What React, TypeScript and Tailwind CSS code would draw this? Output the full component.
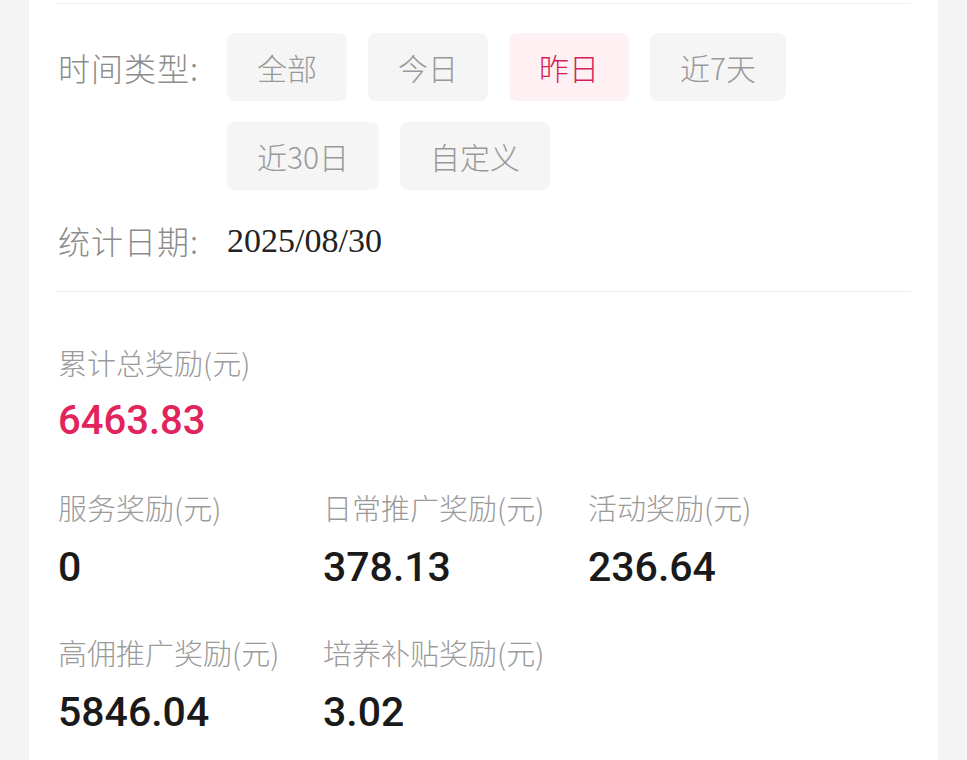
const timeTypes = ["全部", "今日", "昨日", "近7天", "近30日", "自定义"];

const rewards = [
  { label: "服务奖励(元)", value: "0" },
  { label: "日常推广奖励(元)", value: "378.13" },
  { label: "活动奖励(元)", value: "236.64" },
  { label: "高佣推广奖励(元)", value: "5846.04" },
  { label: "培养补贴奖励(元)", value: "3.02" },
];

const cjk = "font-['Noto_Sans_CJK_SC','Noto_Sans',sans-serif]";
const num = "font-['Roboto','Noto_Sans',sans-serif]";

export default function App() {
  const active = "昨日";

  return (
    <div className="min-h-[760px] w-full bg-[#f4f4f4] px-[29px]">
      <div className="min-h-[760px] bg-white px-[27px] pt-[3px]">
        {/* filter */}
        <div className="border-t border-[#f0f0f0] pt-[29px]">
          <div className="flex">
            <div className={`flex h-[68px] w-[171px] shrink-0 items-center pl-[2px] text-[32px] font-light tracking-[1px] text-[#8c8c8c] ${cjk}`}>
              时间类型:
            </div>
            <div className="flex flex-wrap gap-x-[21px] gap-y-[21px]">
              {timeTypes.map((t) => (
                <div
                  key={t}
                  className={`flex h-[68px] items-center rounded-[8px] px-[30px] text-[30px] font-light ${cjk} ${
                    t === active ? "bg-[#fff0f3] text-[#d61f5a]" : "bg-[#f5f5f5] text-[#999999]"
                  }`}
                >
                  {t}
                </div>
              ))}
            </div>
          </div>

          <div className="mt-[28px] flex h-[44px] items-center">
            <div className={`w-[171px] shrink-0 pl-[2px] text-[32px] font-light tracking-[1px] text-[#8c8c8c] ${cjk}`}>统计日期:</div>
            <div className="font-['Liberation_Serif',serif] text-[34px] text-[#222222]">2025/08/30</div>
          </div>
        </div>

        {/* rewards */}
        <div className="mt-[29px] border-t border-[#eeeeee] pl-[2px] pt-[50px]">
          <div className={`h-[40px] leading-[40px] text-[29px] font-light text-[#9a9a9a] ${cjk}`}>累计总奖励(元)</div>
          <div className={`mt-[15px] h-[48px] leading-[48px] text-[40px] font-medium text-[#e2245c] ${num}`}>6463.83</div>

          <div className="mt-[42px] grid grid-cols-[265px_265px_265px] gap-y-[41px]">
            {rewards.map((r) => (
              <div key={r.label}>
                <div className={`h-[40px] leading-[40px] text-[29px] font-light text-[#9a9a9a] whitespace-nowrap ${cjk}`}>{r.label}</div>
                <div className={`mt-[16px] h-[48px] leading-[48px] text-[41px] font-medium text-[#1a1a1a] ${num}`}>{r.value}</div>
              </div>
            ))}
          </div>
        </div>
      </div>
    </div>
  );
}
